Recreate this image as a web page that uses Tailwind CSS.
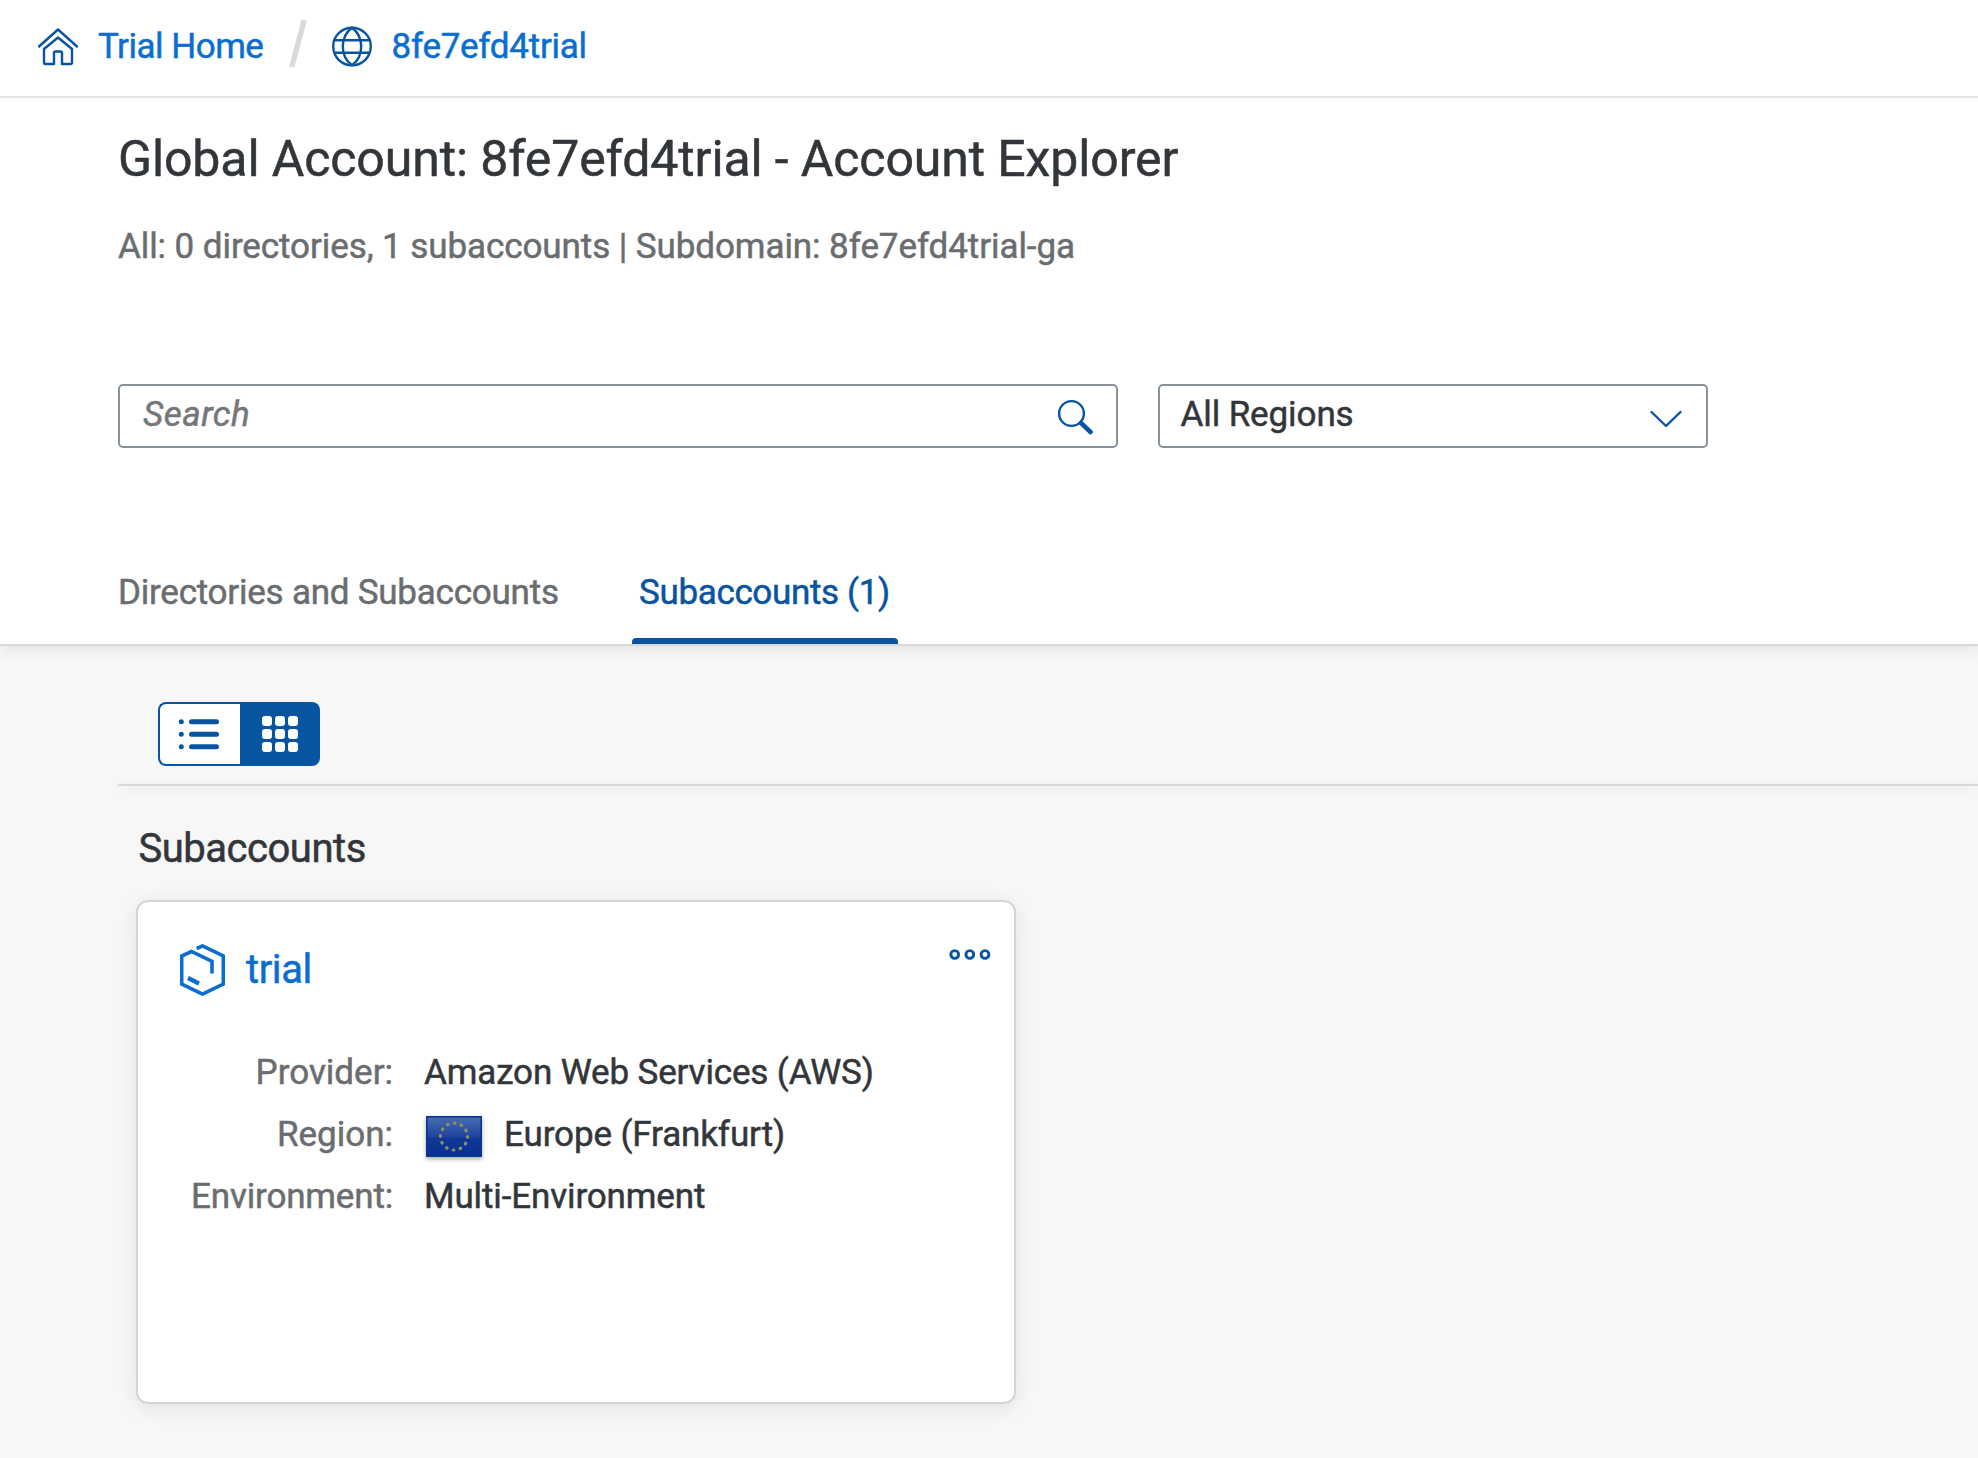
<!DOCTYPE html>
<html lang="en">
<head>
<meta charset="utf-8">
<title>Account Explorer</title>
<script src="https://cdn.jsdelivr.net/npm/@tailwindcss/browser@4"></script>
</head>
<body class="h-[1458px] overflow-hidden bg-[#f7f7f7] font-['Roboto',sans-serif] text-[35px] leading-[44px] text-[#32363a] [-webkit-text-stroke:0.5px_currentColor]">

<header class="relative z-10 flex h-[98px] items-center border-b-2 border-[#e5e5e5] bg-white pb-1 pl-[38px]">
  <svg class="mt-px h-[40px] w-[40px] shrink-0" viewBox="0 0 40 40" fill="none" stroke="#0854a0" stroke-width="2.4" stroke-linecap="round" stroke-linejoin="round">
    <path d="M1 19.5 20 2.500 39 19.500"/>
    <path d="M6 22 20 10.500 34 22V35.500a1.500 1.500 0 0 1-1.500 1.500H24V26a1.500 1.500 0 0 0-1.500-1.500h-5A1.500 1.500 0 0 0 16 26V37H7.500A1.500 1.500 0 0 1 6 35.500Z"/>
  </svg>
  <a class="mt-[2px] ml-[20px] w-[166px] whitespace-nowrap tracking-[-0.5px] text-[#0a6ed1]">Trial Home</a>
  <svg class="ml-[25px] h-[47px] w-[18px] shrink-0 -translate-y-[3px]" viewBox="0 0 18 47"><path d="M12.500 0H18L5.500 47H0Z" fill="#d9d9d9"/></svg>
  <svg class="mt-px ml-[25px] h-[41px] w-[40px] shrink-0" viewBox="0 0 40 40" fill="none" stroke="#0854a0" stroke-width="2.400">
    <circle cx="20" cy="20" r="18.800"/>
    <path d="M20 1.200C13.500 6 10.800 12.500 10.800 20S13.500 34 20 38.800C26.500 34 29.200 27.500 29.200 20S26.500 6 20 1.200ZM2.500 13.700h35M2.500 26.300h35"/>
  </svg>
  <a class="mt-[2px] ml-[19.5px] whitespace-nowrap tracking-[-0.27px] text-[#0a6ed1]">8fe7efd4trial</a>
</header>

<section class="flex h-[548px] flex-col border-b-2 border-[#d9d9d9] bg-white pl-[118px] shadow-[0_2px_16px_rgba(0,0,0,0.10)]">
  <h1 class="mt-[31px] text-[50px] leading-[60px] tracking-[-0.12px]">Global Account: 8fe7efd4trial - Account Explorer</h1>
  <p class="mt-[36px] tracking-[-0.08px] text-[#6a6d70]">All: 0 directories, 1 subaccounts | Subdomain: 8fe7efd4trial-ga</p>

  <div class="mt-[115px] flex gap-[40px]">
    <div class="flex h-16 w-[1000px] items-center justify-between rounded-[5px] border-2 border-[#89919a] pr-[22px] pl-[23px]">
      <span class="pb-[2px] tracking-[0.5px] text-[#74777a] italic">Search</span>
      <svg class="mt-px h-[36px] w-[37px]" viewBox="0 0 37 36" fill="none" stroke="#0854a0">
        <circle cx="14.500" cy="14.500" r="12.400" stroke-width="2.400"/>
        <path d="M24 24 33.500 33" stroke-width="4.500" stroke-linecap="round"/>
      </svg>
    </div>
    <div class="flex h-16 w-[550px] items-center justify-between rounded-[5px] border-2 border-[#89919a] pr-[24px] pl-[20.5px]">
      <span class="pb-[2px] tracking-[-0.1px]">All Regions</span>
      <svg class="mt-[5px] h-[18px] w-[32px]" viewBox="0 0 32 18" fill="none" stroke="#0854a0" stroke-width="2.400" stroke-linecap="round" stroke-linejoin="round"><path d="M1.500 2 16 16 30.500 2"/></svg>
    </div>
  </div>

  <nav class="mt-[123px] flex h-[73px]">
    <span class="w-[514px] tracking-[-0.23px] text-[#6a6d70]">Directories and Subaccounts</span>
    <div class="flex w-[266px] flex-col justify-between">
      <span class="pl-[7px] tracking-[-0.34px] whitespace-nowrap text-[#0854a0]">Subaccounts (1)</span>
      <div class="h-[6px] rounded-t-[4px] bg-[#0854a0]"></div>
    </div>
  </nav>
</section>

<main class="pl-[118px]">
  <div class="flex h-[138px] pt-[56px] pl-[40px]">
    <div class="flex h-16 w-[82px] items-center rounded-l-[8px] border-2 border-r-0 border-[#0854a0] bg-white pl-[18px]">
      <svg class="h-[32px] w-[42px]" viewBox="0 0 42 32" fill="none" stroke="#0854a0" stroke-width="5" stroke-linecap="round">
        <path d="M3.300 3.800h0M3.300 16.200h0M3.300 28.700h0M13.500 3.800h25M13.500 16.200h25M13.500 28.700h25"/>
      </svg>
    </div>
    <div class="flex h-16 w-[80px] items-center justify-center rounded-r-[8px] bg-[#0854a0]">
      <div class="grid grid-cols-3 gap-[3px]">
        <i class="size-[10px] rounded-[3px] bg-white"></i><i class="size-[10px] rounded-[3px] bg-white"></i><i class="size-[10px] rounded-[3px] bg-white"></i>
        <i class="size-[10px] rounded-[3px] bg-white"></i><i class="size-[10px] rounded-[3px] bg-white"></i><i class="size-[10px] rounded-[3px] bg-white"></i>
        <i class="size-[10px] rounded-[3px] bg-white"></i><i class="size-[10px] rounded-[3px] bg-white"></i><i class="size-[10px] rounded-[3px] bg-white"></i>
      </div>
    </div>
  </div>
  <div class="h-[2px] bg-[#d9d9d9] shadow-[0_2px_12px_rgba(0,0,0,0.12)]"></div>

  <h2 class="mt-[39px] ml-[20.5px] text-[40px] leading-[48px] tracking-[-0.48px]">Subaccounts</h2>

  <article class="mt-[27px] ml-[18px] h-[504px] w-[880px] rounded-[12px] border-2 border-[#d5d5d5] bg-white pt-[42px] shadow-[0_4px_20px_rgba(0,0,0,0.09)]">
    <div class="flex h-12 items-center pr-[23px] pl-[42px]">
      <svg class="mt-[3px] h-[52px] w-[45px] shrink-0" viewBox="0 0 45 52" fill="none" stroke="#0a6ed1" stroke-width="3.600">
        <path d="M16.700 4.500 22.500 1.900 43.300 12V40L22.500 50.100 1.700 40V12L11.500 7.500 32 17.300V29.500"/>
        <path d="M8 34 19 39.500" stroke-width="4.200"/>
      </svg>
      <a class="mt-[3px] ml-[21px] text-[40px] leading-[48px] tracking-[-0.4px] text-[#0a6ed1]">trial</a>
      <svg class="ml-auto h-[12px] w-[42px] -translate-y-[13.500px]" viewBox="0 0 42 12" fill="none" stroke="#0854a0" stroke-width="2.900">
        <circle cx="5.700" cy="6" r="3.900"/><circle cx="20.800" cy="6" r="3.900"/><circle cx="36" cy="6" r="3.900"/>
      </svg>
    </div>
    <dl class="mt-[50px] grid grid-cols-[255px_1fr] gap-x-[31px] leading-[62px]">
      <dt class="text-right text-[#6a6d70]">Provider:</dt>
      <dd class="tracking-[-0.14px]">Amazon Web Services (AWS)</dd>
      <dt class="text-right text-[#6a6d70]">Region:</dt>
      <dd class="flex items-center">
        <svg class="mt-[3px] ml-[2px] h-[41px] w-[56px] shrink-0 drop-shadow-[0_2px_2px_rgba(0,0,0,0.35)]" viewBox="0 0 56 41">
          <defs><linearGradient id="flag" x1="0" y1="0" x2="0" y2="1"><stop offset="0" stop-color="#4a6fb5"/><stop offset=".5" stop-color="#1f449c"/><stop offset=".55" stop-color="#103797"/><stop offset="1" stop-color="#06308f"/></linearGradient></defs>
          <rect width="56" height="41" fill="url(#flag)"/>
          <rect x=".8" y=".8" width="54.400" height="39.400" fill="none" stroke="#0a3590" stroke-width="1.600"/>
          <circle cx="28" cy="20.500" r="13.500" fill="none" stroke="#8f9160" stroke-width="3.200" stroke-linecap="round" stroke-dasharray="0.600 6.469"/>
        </svg>
        <span class="ml-[22px] tracking-[-0.12px]">Europe (Frankfurt)</span>
      </dd>
      <dt class="text-right tracking-[-0.17px] text-[#6a6d70]">Environment:</dt>
      <dd class="tracking-[-0.13px]">Multi-Environment</dd>
    </dl>
  </article>
</main>
</body>
</html>
